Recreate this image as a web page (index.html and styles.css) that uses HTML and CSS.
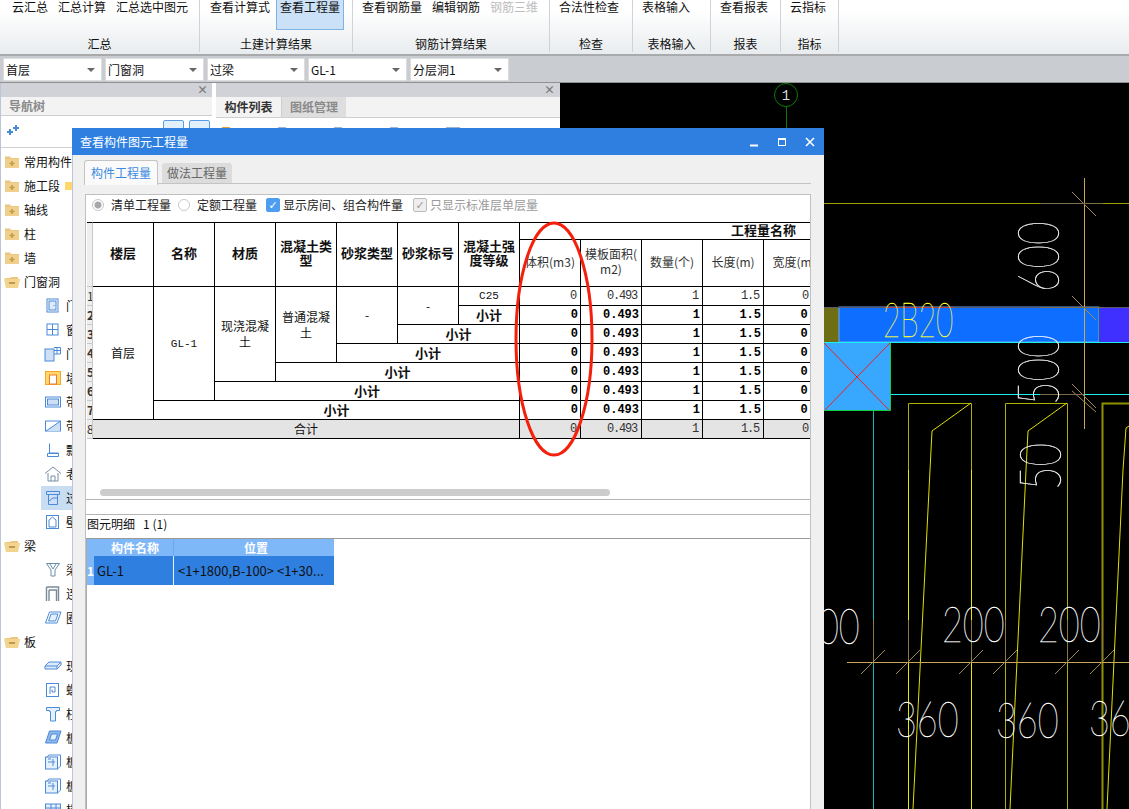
FILE: index.html
```html
<!DOCTYPE html>
<html lang="zh">
<head>
<meta charset="utf-8">
<title>查看构件图元工程量</title>
<link rel="stylesheet" href="styles.css">
</head>
<body>
<svg class="defs" width="0" height="0">
  <symbol id="f-plus" viewBox="0 0 16 14"><path d="M1 3V1.500h5L7 3h8v10H1z" fill="#eac67e"/><path d="M1 4h14v9H1z" fill="#f0d08c"/><path d="M8 6v5M5.500 8.500h5" stroke="#c49a4a" stroke-width="1.600"/></symbol>
  <symbol id="f-open" viewBox="0 0 16 14"><path d="M0 3h6l1-1h7v3H4z" fill="#eac67e"/><path d="M0 4h16l-2 9H2z" fill="#f2d48e"/><path d="M5 8h6" stroke="#b08a40" stroke-width="1.600"/></symbol>
  <symbol id="i-door" viewBox="0 0 18 16"><rect x="3" y="1" width="11" height="13" fill="none" stroke="#4a8ad8"/><rect x="5" y="3" width="7" height="9" fill="#dfeafa" stroke="#4a8ad8"/><path d="M10 7v1" stroke="#4a8ad8"/></symbol>
  <symbol id="i-win" viewBox="0 0 18 16"><rect x="3" y="2" width="11" height="11" fill="none" stroke="#4a8ad8"/><path d="M8.500 2v11M3 7.500h11" stroke="#4a8ad8"/></symbol>
  <symbol id="i-doorwin" viewBox="0 0 18 16"><rect x="1" y="3" width="9" height="12" fill="#cfe0f6" stroke="#4a8ad8"/><path d="M10 1.500h6.500V8H10M13 1.500V8M10 4.500h6.500" fill="none" stroke="#4a8ad8"/></symbol>
  <symbol id="i-wallhole" viewBox="0 0 18 16"><rect x="1.500" y="1.500" width="15" height="13" fill="#ffd76a" stroke="#f5a623"/><rect x="5.500" y="5" width="7" height="9" fill="#fff" stroke="#ee7a2a"/></symbol>
  <symbol id="i-strip" viewBox="0 0 18 16"><rect x="1.500" y="3" width="15" height="10" fill="none" stroke="#4a8ad8"/><rect x="3.500" y="5" width="11" height="6" fill="#cfe0f6" stroke="#4a8ad8"/></symbol>
  <symbol id="i-striph" viewBox="0 0 18 16"><rect x="1.500" y="3" width="15" height="10" fill="none" stroke="#4a8ad8"/><path d="M2 13L16 3.500V13z" fill="#cfe0f6"/><path d="M2 13L16 3.500" stroke="#4a8ad8"/></symbol>
  <symbol id="i-bay" viewBox="0 0 18 16"><path d="M5.500 1.500V11h9M3.500 11.500h11v3h-11z" fill="none" stroke="#4a8ad8"/></symbol>
  <symbol id="i-house" viewBox="0 0 18 16"><path d="M1 7.500L9 1l8 6.500M4 7v8h10V7M7 15v-5h4v5" fill="none" stroke="#7a8ea8"/></symbol>
  <symbol id="i-lintel" viewBox="0 0 18 16"><path d="M2.500 1.500h13v3h-13zM4.500 4.500h9v10h-9z" fill="#cfe0f6" stroke="#4a8ad8"/><path d="M5 11l4-3h4" fill="none" stroke="#4a8ad8"/></symbol>
  <symbol id="i-niche" viewBox="0 0 18 16"><rect x="2.500" y="1.500" width="12" height="13" fill="none" stroke="#4a8ad8"/><path d="M5 13V6l3.500-3L12 6v7z" fill="none" stroke="#4a8ad8"/></symbol>
  <symbol id="i-beam" viewBox="0 0 18 16"><path d="M2.500 1.500h13L11 8v6H7V8zM6 2l3 5 3-5" fill="none" stroke="#6a8ea8"/></symbol>
  <symbol id="i-link" viewBox="0 0 18 16"><path d="M2.500 1h12v14M2.500 1v14M5 4h7.500v11M5 4v11" fill="none" stroke="#7a8a98" stroke-width="1.400"/></symbol>
  <symbol id="i-ring" viewBox="0 0 18 16"><path d="M5.500 2H17l-4 11H1.500z" fill="none" stroke="#4a8ad8"/><path d="M7 4h7l-2.500 7H4.500z" fill="#e6f0fb" stroke="#4a8ad8"/></symbol>
  <symbol id="i-slab" viewBox="0 0 18 16"><path d="M5 4h12l-4 4H1zM1 8v3h12V8M13 11l4-4V4" fill="#dfeafa" stroke="#4a8ad8"/></symbol>
  <symbol id="i-spiral" viewBox="0 0 18 16"><rect x="2.500" y="1.500" width="12" height="13" fill="none" stroke="#4a8ad8"/><path d="M6 12V5h5v5H8V7.500" fill="none" stroke="#4a8ad8"/></symbol>
  <symbol id="i-cap" viewBox="0 0 18 16"><path d="M2.500 1.500h13v3h-3v1h-1V15h-5V5.500h-1v-1h-3z" fill="#e6f0fb" stroke="#4a8ad8"/></symbol>
  <symbol id="i-slabhole" viewBox="0 0 18 16"><path d="M5.500 1H17l-4 12H1.500z" fill="#8fb8ea" stroke="#4a8ad8"/><path d="M7.500 4h6l-2 6h-6z" fill="#e6f0fb" stroke="#4a8ad8"/></symbol>
  <symbol id="i-rebar" viewBox="0 0 18 16"><rect x="1.500" y="3" width="12" height="12" fill="#e6f0fb" stroke="#4a8ad8"/><path d="M3 3l2-2h11.500v11l-3 3M4 8h7M9 5v7M4 5h3" fill="none" stroke="#4a8ad8"/></symbol>
  <symbol id="i-band" viewBox="0 0 18 16"><rect x="1.500" y="2" width="15" height="13" fill="#e6f0fb" stroke="#4a8ad8"/><path d="M1.500 6h15M7 2v13M12 2v13" stroke="#4a8ad8"/></symbol>
</svg>

<div class="app">
  <header class="ribbon">
    <section class="group g1">
      <div class="btns"><span class="rb">云汇总</span><span class="rb">汇总计算</span><span class="rb">汇总选中图元</span></div>
      <div class="glabel">汇总</div>
    </section>
    <section class="group g2">
      <div class="btns"><span class="rb">查看计算式</span><span class="rb on">查看工程量</span></div>
      <div class="glabel">土建计算结果</div>
    </section>
    <section class="group g3">
      <div class="btns"><span class="rb">查看钢筋量</span><span class="rb">编辑钢筋</span><span class="rb off">钢筋三维</span></div>
      <div class="glabel">钢筋计算结果</div>
    </section>
    <section class="group g4">
      <div class="btns"><span class="rb">合法性检查</span></div>
      <div class="glabel">检查</div>
    </section>
    <section class="group g5">
      <div class="btns"><span class="rb">表格输入</span></div>
      <div class="glabel">表格输入</div>
    </section>
    <section class="group g6">
      <div class="btns"><span class="rb">查看报表</span></div>
      <div class="glabel">报表</div>
    </section>
    <section class="group g7">
      <div class="btns"><span class="rb">云指标</span></div>
      <div class="glabel">指标</div>
    </section>
  </header>

  <div class="combos">
    <div class="combo c-a">首层</div>
    <div class="combo c-a">门窗洞</div>
    <div class="combo c-n">过梁</div>
    <div class="combo c-a">GL-1</div>
    <div class="combo c-a">分层洞1</div>
  </div>

  <main class="work">
    <aside class="nav">
      <div class="phead"><span class="px">×</span></div>
      <div class="navtitle">导航树</div>
      <div class="navtools">
        <svg class="spark" width="12" height="10" viewBox="0 0 12 10"><path d="M3 4v6M0 7h6M9 0v6M6 3h6" stroke="#4a8ad8" stroke-width="2"/></svg>
        <span class="tbtn"></span><span class="tbtn"></span>
      </div>
      <ul class="tree">
        <li class="folder"><svg class="fi"><use href="#f-plus"/></svg>常用构件类型</li>
        <li class="folder"><svg class="fi"><use href="#f-plus"/></svg>施工段<span class="mini"></span></li>
        <li class="folder"><svg class="fi"><use href="#f-plus"/></svg>轴线</li>
        <li class="folder"><svg class="fi"><use href="#f-plus"/></svg>柱</li>
        <li class="folder"><svg class="fi"><use href="#f-plus"/></svg>墙</li>
        <li class="folder"><svg class="fi"><use href="#f-open"/></svg>门窗洞</li>
        <li class="leaf"><svg class="li"><use href="#i-door"/></svg>门</li>
        <li class="leaf"><svg class="li"><use href="#i-win"/></svg>窗</li>
        <li class="leaf"><svg class="li"><use href="#i-doorwin"/></svg>门联窗</li>
        <li class="leaf"><svg class="li"><use href="#i-wallhole"/></svg>墙洞</li>
        <li class="leaf"><svg class="li"><use href="#i-strip"/></svg>带形窗</li>
        <li class="leaf"><svg class="li"><use href="#i-striph"/></svg>带形洞</li>
        <li class="leaf"><svg class="li"><use href="#i-bay"/></svg>飘窗</li>
        <li class="leaf"><svg class="li"><use href="#i-house"/></svg>老虎窗</li>
        <li class="leaf sel"><svg class="li"><use href="#i-lintel"/></svg>过梁</li>
        <li class="leaf"><svg class="li"><use href="#i-niche"/></svg>壁龛</li>
        <li class="folder"><svg class="fi"><use href="#f-open"/></svg>梁</li>
        <li class="leaf"><svg class="li"><use href="#i-beam"/></svg>梁</li>
        <li class="leaf"><svg class="li"><use href="#i-link"/></svg>连梁</li>
        <li class="leaf"><svg class="li"><use href="#i-ring"/></svg>圈梁</li>
        <li class="folder"><svg class="fi"><use href="#f-open"/></svg>板</li>
        <li class="leaf"><svg class="li"><use href="#i-slab"/></svg>现浇板</li>
        <li class="leaf"><svg class="li"><use href="#i-spiral"/></svg>螺旋板</li>
        <li class="leaf"><svg class="li"><use href="#i-cap"/></svg>柱帽</li>
        <li class="leaf"><svg class="li"><use href="#i-slabhole"/></svg>板洞</li>
        <li class="leaf"><svg class="li"><use href="#i-rebar"/></svg>板受力筋</li>
        <li class="leaf"><svg class="li"><use href="#i-rebar"/></svg>板负筋</li>
        <li class="leaf"><svg class="li"><use href="#i-band"/></svg>楼层板带</li>
      </ul>
    </aside>

    <aside class="list">
      <div class="phead"><span class="px">×</span></div>
      <div class="listtabs"><span class="ltab act">构件列表</span><span class="ltab">图纸管理</span></div>
      <div class="listtools"><span class="tk a"></span><span class="tk"></span><span class="tk"></span><span class="tk b"></span><span class="tk c"></span></div>
    </aside>

    <div class="canvas">
      <svg class="cad" width="569" height="726" viewBox="560 83 569 726">
        <circle cx="786" cy="95" r="11.500" fill="none" stroke="#0a7a0a"/>
        <path d="M786.500 107V128" stroke="#0a7a0a"/>
        <text class="axis" x="786" y="100">1</text>

        <path d="M824 203.500H1129" stroke="#a0a000"/>
        <rect x="824" y="307" width="15" height="35" fill="#6e6e14"/>
        <rect x="839" y="307" width="260" height="35" fill="#0e6eff" stroke="#6aa8f8"/>
        <rect x="1100" y="307" width="29" height="35" fill="#4030ff"/>
        <path d="M824 307.500H1129" stroke="#5a5a6a"/>
        <path d="M884 307.500H954" stroke="#c04040"/>
        <path d="M824 342.500H1129M890 394.500H1129" stroke="#19f0f0"/>
        <path d="M873.500 411V809" stroke="#10b8b8"/>

        <rect x="824" y="343" width="66" height="68" fill="#38a8ff"/>
        <path d="M824 343L890 411M890 343L824 411" stroke="#f02020"/>
        <path d="M824 410.500H890.500V343" fill="none" stroke="#10d040"/>

        <text class="t-bar" transform="translate(883 337) scale(.62 1)">2B20</text>

        <path d="M908.500 809V403.500H971.500V809M1005.500 809V403.500H1067.500V809" fill="none" stroke="#b0b000"/>
        <path d="M1102.500 809V403.500H1129" fill="none" stroke="#909000" stroke-width="2"/>
        <path d="M908.500 470V809M971.500 470V809" stroke="#e8e800"/>
        <path d="M971 403L932 431L930 470L913 809M1067 403L1028 431L1026 470L1010 809M1129 426L1126 428L1123 470L1107 809" fill="none" stroke="#e0e000"/>

        <path d="M1084.500 178V429" stroke="#c8a858"/>
        <path d="M1072 192L1096 216M1072 296L1096 320M1072 391L1096 412M1072 384L1096 408" stroke="#a08850"/>
        <path d="M1040 203.500H1103M1040 307.500H1103M1040 394.500H1084" stroke="#7a6c48"/>

        <text class="t-big" transform="translate(1059 292) rotate(-90) scale(.7 1)">600</text>
        <text class="t-big" transform="translate(1059 405) rotate(-90) scale(.7 1)">500</text>
        <text class="t-big" transform="translate(1061 490) rotate(-90) scale(.7 1)">50</text>

        <path d="M847 662.500H1129" stroke="#c8a858"/>
        <path d="M873.500 620V662M908.500 620V662M971.500 620V662M1005.500 620V662M1067.500 620V662M1102.500 620V662" stroke="#8a7a40"/>
        <path d="M861 674L885 650M896 674L920 650M959 674L983 650M993 674L1017 650M1055 674L1079 650M1090 674L1114 650" stroke="#a08850"/>

        <text class="t-num" transform="translate(818 644) scale(.72 1)">00</text>
        <text class="t-num" transform="translate(942 642) scale(.72 1)">200</text>
        <text class="t-num" transform="translate(1038 642) scale(.72 1)">200</text>
        <text class="t-num" transform="translate(896 737) scale(.72 1)">360</text>
        <text class="t-num" transform="translate(996 738) scale(.72 1)">360</text>
        <text class="t-num" transform="translate(1089 736) scale(.72 1)">36</text>
      </svg>
    </div>
  </main>

  <div class="dialog">
    <div class="dtitle">
      <span class="dname">查看构件图元工程量</span>
      <span class="wbtns">
        <svg width="10" height="10" viewBox="0 0 10 10"><path d="M1 8.500H9" stroke="#fff" stroke-width="2"/></svg>
        <svg width="10" height="10" viewBox="0 0 10 10"><rect x="1.500" y="1.500" width="7" height="7" fill="none" stroke="#fff"/><path d="M1 2H9" stroke="#fff" stroke-width="2"/></svg>
        <svg width="10" height="10" viewBox="0 0 10 10"><path d="M1 1L9 9M9 1L1 9" stroke="#fff" stroke-width="1.600"/></svg>
      </span>
    </div>
    <div class="dbody">
      <div class="dtabs"><span class="dtab act">构件工程量</span><span class="dtab">做法工程量</span></div>
      <div class="dpanel">
        <div class="upper">
          <div class="opts">
            <span class="opt o1"><i class="radio chk"></i>清单工程量</span>
            <span class="opt o2"><i class="radio"></i>定额工程量</span>
            <span class="opt o3"><i class="cb on">✓</i>显示房间、组合构件量</span>
            <span class="opt dis"><i class="cb">✓</i>只显示标准层单层量</span>
          </div>
          <div class="tblwrap">
            <table class="qty">
              <colgroup>
                <col class="c0"><col class="c"><col class="c"><col class="c"><col class="c"><col class="c"><col class="c"><col class="c"><col class="c"><col class="c"><col class="c"><col class="c"><col class="c"><col class="c"><col class="c"><col class="c">
              </colgroup>
              <thead>
                <tr class="h1">
                  <th class="rn" rowspan="2"></th>
                  <th rowspan="2">楼层</th><th rowspan="2">名称</th><th rowspan="2">材质</th>
                  <th rowspan="2">混凝土类型</th><th rowspan="2">砂浆类型</th><th rowspan="2">砂浆标号</th>
                  <th rowspan="2">混凝土强度等级</th><th colspan="8">工程量名称</th>
                </tr>
                <tr class="h2">
                  <th class="lt">体积(m3)</th><th class="lt">模板面积(<br>m2)</th><th class="lt">数量(个)</th><th class="lt">长度(m)</th><th class="lt">宽度(m)</th><th class="lt">高度(m)</th><th class="lt">截面周长(m)</th><th class="lt">截面面积(m2)</th>
                </tr>
              </thead>
              <tbody>
                <tr>
                  <td class="rn">1</td><td rowspan="7">首层</td><td rowspan="6" class="mono">GL-1</td><td rowspan="5">现浇混凝土</td><td rowspan="4">普通混凝土</td><td rowspan="3">-</td><td rowspan="2">-</td><td class="mono">C25</td>
                  <td class="n">0</td><td class="n">0.493</td><td class="n">1</td><td class="n">1.5</td><td class="n">0.2</td><td class="n">0.12</td><td class="n">0.64</td><td class="n">0.024</td>
                </tr>
                <tr class="sub">
                  <td class="rn">2</td><td>小计</td>
                  <td class="n">0</td><td class="n">0.493</td><td class="n">1</td><td class="n">1.5</td><td class="n">0.2</td><td class="n">0.12</td><td class="n">0.64</td><td class="n">0.024</td>
                </tr>
                <tr class="sub">
                  <td class="rn">3</td><td colspan="2">小计</td>
                  <td class="n">0</td><td class="n">0.493</td><td class="n">1</td><td class="n">1.5</td><td class="n">0.2</td><td class="n">0.12</td><td class="n">0.64</td><td class="n">0.024</td>
                </tr>
                <tr class="sub">
                  <td class="rn">4</td><td colspan="3">小计</td>
                  <td class="n">0</td><td class="n">0.493</td><td class="n">1</td><td class="n">1.5</td><td class="n">0.2</td><td class="n">0.12</td><td class="n">0.64</td><td class="n">0.024</td>
                </tr>
                <tr class="sub">
                  <td class="rn">5</td><td colspan="4">小计</td>
                  <td class="n">0</td><td class="n">0.493</td><td class="n">1</td><td class="n">1.5</td><td class="n">0.2</td><td class="n">0.12</td><td class="n">0.64</td><td class="n">0.024</td>
                </tr>
                <tr class="sub">
                  <td class="rn">6</td><td colspan="5">小计</td>
                  <td class="n">0</td><td class="n">0.493</td><td class="n">1</td><td class="n">1.5</td><td class="n">0.2</td><td class="n">0.12</td><td class="n">0.64</td><td class="n">0.024</td>
                </tr>
                <tr class="sub">
                  <td class="rn">7</td><td colspan="6">小计</td>
                  <td class="n">0</td><td class="n">0.493</td><td class="n">1</td><td class="n">1.5</td><td class="n">0.2</td><td class="n">0.12</td><td class="n">0.64</td><td class="n">0.024</td>
                </tr>
                <tr class="total">
                  <td class="rn">8</td><td colspan="7">合计</td>
                  <td class="n">0</td><td class="n">0.493</td><td class="n">1</td><td class="n">1.5</td><td class="n">0.2</td><td class="n">0.12</td><td class="n">0.64</td><td class="n">0.024</td>
                </tr>
              </tbody>
            </table>
          </div>
          <div class="hscroll"><span class="thumb"></span></div>
        </div>
        <div class="lower">
          <div class="ltitle">图元明细&nbsp;&nbsp; 1 (1)</div>
          <div class="grid">
            <div class="grow ghead"><span class="g0"></span><span class="gn">构件名称</span><span class="gp">位置</span></div>
            <div class="grow gsel"><span class="g0">1</span><span class="gn">GL-1</span><span class="gp">&lt;1+1800,B-100&gt; &lt;1+30...</span></div>
          </div>
        </div>
      </div>
    </div>
    <svg class="mark" width="84" height="240" viewBox="0 0 84 240"><ellipse cx="42" cy="120" rx="38" ry="116" fill="none" stroke="#f4200c" stroke-width="3"/></svg>
  </div>
</div>
</body>
</html>
```
FILE: styles.css
```css
* { box-sizing: border-box; }
html, body { margin: 0; height: 100%; overflow: hidden; background: #fff; }
body { font: 12px/16px "Noto Sans CJK SC", "Liberation Sans", sans-serif; color: #111; }
.defs { position: absolute; }
.app { position: relative; width: 1129px; height: 809px; display: flex; flex-direction: column; overflow: hidden; }

/* ribbon */
.ribbon { height: 56px; flex: none; display: flex; background: linear-gradient(#fff 20%, #e8ecee); border-bottom: 2px solid #a8aaac; }
.group { height: 52px; display: flex; flex-direction: column; justify-content: space-between; border-right: 1px solid #d0d3d6; }
.g1 { width: 200px; }
.g2 { width: 153px; }
.g3 { width: 197px; }
.g4 { width: 83px; }
.g5 { width: 78px; }
.g6 { width: 70px; }
.g7 { width: 58px; }
.btns { display: flex; height: 30px; padding-left: 4px; }
.g1 .btns { padding-left: 7px; }
.g2 .btns { padding-left: 5px; }
.rb { padding: 0 5px; line-height: 14px; white-space: nowrap; }
.rb.on { margin: 0 1px; padding: 0 3px; background: #cbe1f8; border: 1px solid #7fb2e6; border-top: 0; }
.rb.off { color: #bdbdbd; }
.glabel { text-align: center; line-height: 18px; height: 17px; }

/* combos */
.combos { height: 27px; flex: none; display: flex; gap: 3px; padding: 2px 3px; background: #c9ccd1; border-bottom: 1px solid #8e9094; }
.combo { position: relative; height: 23px; background: #fff; border: 1px solid #dcdcdc; padding-left: 2px; line-height: 21px; font-size: 12px; }
.c-a { width: 99px; }
.c-n { width: 98px; }
.combo::after { content: ""; position: absolute; right: 6px; top: 9px; border: 4px solid transparent; border-top-color: #666; border-bottom: 0; }

/* panels */
.work { flex: 1; display: flex; min-height: 0; }
.nav { width: 212px; flex: none; background: #fff; border-left: 1px solid #bcc4d8; }
.list { width: 344px; flex: none; margin-left: 4px; background: #fff; }
.phead { height: 14px; background: #d0d2d7; text-align: right; padding-right: 7px; line-height: 13px; color: #777; font-size: 11px; font-weight: 700; }
.list .phead { padding-right: 8px; }
.px { display: inline-block; width: 8px; }
.navtitle { height: 19px; padding-left: 8px; line-height: 18px; font-weight: 700; color: #8a8a8a; background: #f3f3f3; border-bottom: 1px solid #cfcfcf; }
.navtools { height: 32px; display: flex; align-items: flex-start; gap: 5px; padding: 4px 2px 0 6px; border-bottom: 1px solid #cfcfcf; }
.spark { margin-top: 5px; margin-right: auto; }
.tbtn { width: 21px; height: 16px; border: 1px solid #5a9ce6; border-radius: 2px; background: #e2effc; }
.tree { margin: 2px 0 0; padding: 0; list-style: none; white-space: nowrap; }
.tree li { height: 24px; display: flex; align-items: center; line-height: 24px; }
.folder { padding-left: 3px; }
.fi { width: 16px; height: 14px; margin-right: 4px; }
.leaf { padding-left: 43px; }
.li { width: 18px; height: 16px; margin-right: 4px; }
.tree .sel { margin-left: 40px; padding-left: 3px; background: #c8dcf2; }
.mini { width: 8px; height: 8px; margin-left: 5px; background: #ffd76a; }
.listtabs { height: 21px; display: flex; background: #f3f3f3; border-bottom: 1px solid #cfcfcf; }
.ltab { width: 64px; text-align: center; line-height: 20px; font-weight: 700; color: #8a8a8a; background: #dedede; }
.ltab.act { width: 66px; color: #333; background: #f3f3f3; border-right: 1px solid #cfcfcf; }
.listtools { display: flex; gap: 48px; padding: 9px 0 0 6px; }
.tk { width: 8px; height: 8px; border: 1px solid #9ab4d4; }
.tk.a { border-color: #e0a040; }
.tk.b { background: #cfe0f6; }
.tk.c { background: #4a8ad8; width: 14px; }

/* canvas */
.canvas { flex: 1; background: #000; overflow: hidden; }
.cad { display: block; }
.axis { fill: #ddd; font: 14px "Liberation Mono", monospace; text-anchor: middle; }
.t-num, .t-big { fill: #fff; stroke: #fff; stroke-width: .35px; font-family: "Lato", "Inter", sans-serif; font-weight: 100; font-size: 50px; }
.t-big { font-size: 58px; }
.t-bar { fill: #ffff30; stroke: #ffff30; stroke-width: .3px; font-family: "Lato", "Inter", sans-serif; font-weight: 100; font-size: 48px; }

/* dialog */
.dialog { position: absolute; left: 72px; top: 128px; width: 752px; height: 681px; display: flex; flex-direction: column; background: #f0f0f0; border-left: 1px solid #bcc4d8; }
.dtitle { height: 27px; flex: none; margin-left: -1px; display: flex; justify-content: space-between; align-items: center; padding: 0 9px 0 8px; background: #2e7fe0; color: #fff; font-size: 12px; }
.wbtns { display: flex; gap: 18px; }
.dbody { flex: 1; display: flex; flex-direction: column; padding: 5px 13px 0 11px; min-height: 0; }
.dtabs { height: 24px; flex: none; display: flex; gap: 4px; border-bottom: 1px solid #c4c4c4; }
.dtab { width: 70px; margin-top: 3px; text-align: center; line-height: 19px; color: #666; background: #dcdcdc; border-radius: 3px 3px 0 0; }
.dtab.act { width: 74px; height: 25px; margin-top: 0; line-height: 24px; color: #3a8ae0; background: #fafafa; border: 1px solid #c4c4c4; border-bottom: 0; }
.dpanel { flex: 1; margin-top: 10px; margin-left: 1px; display: flex; flex-direction: column; background: #fff; border: 1px solid #c0c0c0; border-bottom: 0; min-height: 0; }
.upper { height: 305px; flex: none; border-bottom: 1px solid #b4b4b4; position: relative; }
.opts { height: 27px; display: flex; align-items: flex-start; padding: 1px 0 0 6px; color: #222; }
.opt { display: flex; align-items: center; white-space: nowrap; height: 18px; }
.o1 { margin-right: 7px; }
.o2 { margin-right: 9px; }
.o3 { margin-right: 10px; }
.dis { color: #9a9a9a; }
.radio { width: 12px; height: 12px; margin-right: 7px; border: 1px solid #c8c8c8; border-radius: 50%; background: #fff; display: block; }
.radio.chk { background: radial-gradient(circle, #a8a8a8 0 3px, #fff 4px); }
.cb { width: 14px; height: 14px; margin-right: 3px; border: 1px solid #bdbdbd; border-radius: 2px; background: #eee; color: #9a9a9a; font: normal 700 11px/13px "DejaVu Sans", sans-serif; text-align: center; display: block; }
.cb.on { background: #4f9df0; border-color: #4f9df0; color: #fff; }
.tblwrap { margin-left: 1px; width: 723px; overflow: hidden; }
.qty { table-layout: fixed; width: 921px; border-collapse: separate; border-spacing: 0; }
.c0 { width: 6px; }
.c { width: 61px; }
.qty th, .qty td { padding: 0 3px; border-right: 1px solid #000; border-bottom: 1px solid #000; text-align: center; overflow: hidden; }
.qty th { font-size: 13px; line-height: 14px; font-weight: 700; border-top: 1px solid #000; }
.h1 th { height: 18px; padding-bottom: 2px; }
.h2 th { height: 47px; border-top: 0; padding-bottom: 4px; }
.h1 th[rowspan] { height: 65px; padding-bottom: 4px; }
.qty .lt { font-weight: 400; font-size: 12px; line-height: 15px; color: #333; padding: 0 1px 4px; white-space: nowrap; }
.qty td { height: 19px; line-height: 16px; font-size: 12px; }
.qty .rn { padding: 0; background: #eee; border-right: 1px solid #c8c8c8; border-bottom: 1px solid #c8c8c8; font-size: 12px; color: #333; text-align: left; }
.qty .mono { font: 11px "Liberation Mono", monospace; }
.qty .n { text-align: right; padding-right: 4px; font: 12px/16px "Liberation Mono", monospace; letter-spacing: -1.2px; color: #333; }
.sub td { font-weight: 700; font-size: 13px; }
.sub .n { font-weight: 700; color: #000; letter-spacing: 0; padding-right: 2px; }
.total td { background: #e4e4e4; }
.hscroll { position: absolute; left: 14px; bottom: 3px; width: 510px; height: 7px; }
.thumb { display: block; height: 7px; background: #cccccc; border-radius: 4px; }
.lower { flex: 1; min-height: 0; display: flex; flex-direction: column; }
.ltitle { height: 25px; margin-top: 14px; padding-left: 1px; border-top: 1px solid #b4b4b4; line-height: 18px; border-bottom: 1px solid #9a9a9a; font-size: 12px; }
.grid { flex: 1; border-left: 1px solid #aaa; background: #fff; }
.grow { display: flex; }
.g0 { width: 7px; flex: none; background: #7fb8f8; color: #fff; font-weight: 700; text-align: center; }
.gn { width: 80px; flex: none; padding-left: 3px; border-right: 1px solid #e8f0fa; }
.gp { width: 160px; flex: none; padding-left: 4px; white-space: nowrap; overflow: hidden; }
.ghead { height: 17px; line-height: 17px; }
.ghead .gn, .ghead .gp { background: #7fb8f8; color: #fff; font-weight: 700; text-align: center; border-right-color: #6ca8ec; }
.gsel { height: 29px; line-height: 29px; font-size: 13px; }
.gsel .g0 { line-height: 29px; font-size: 12px; }
.gsel .gn, .gsel .gp { background: #2e7fe0; color: #111; }

.mark { position: absolute; left: 439px; top: 91px; }
```
